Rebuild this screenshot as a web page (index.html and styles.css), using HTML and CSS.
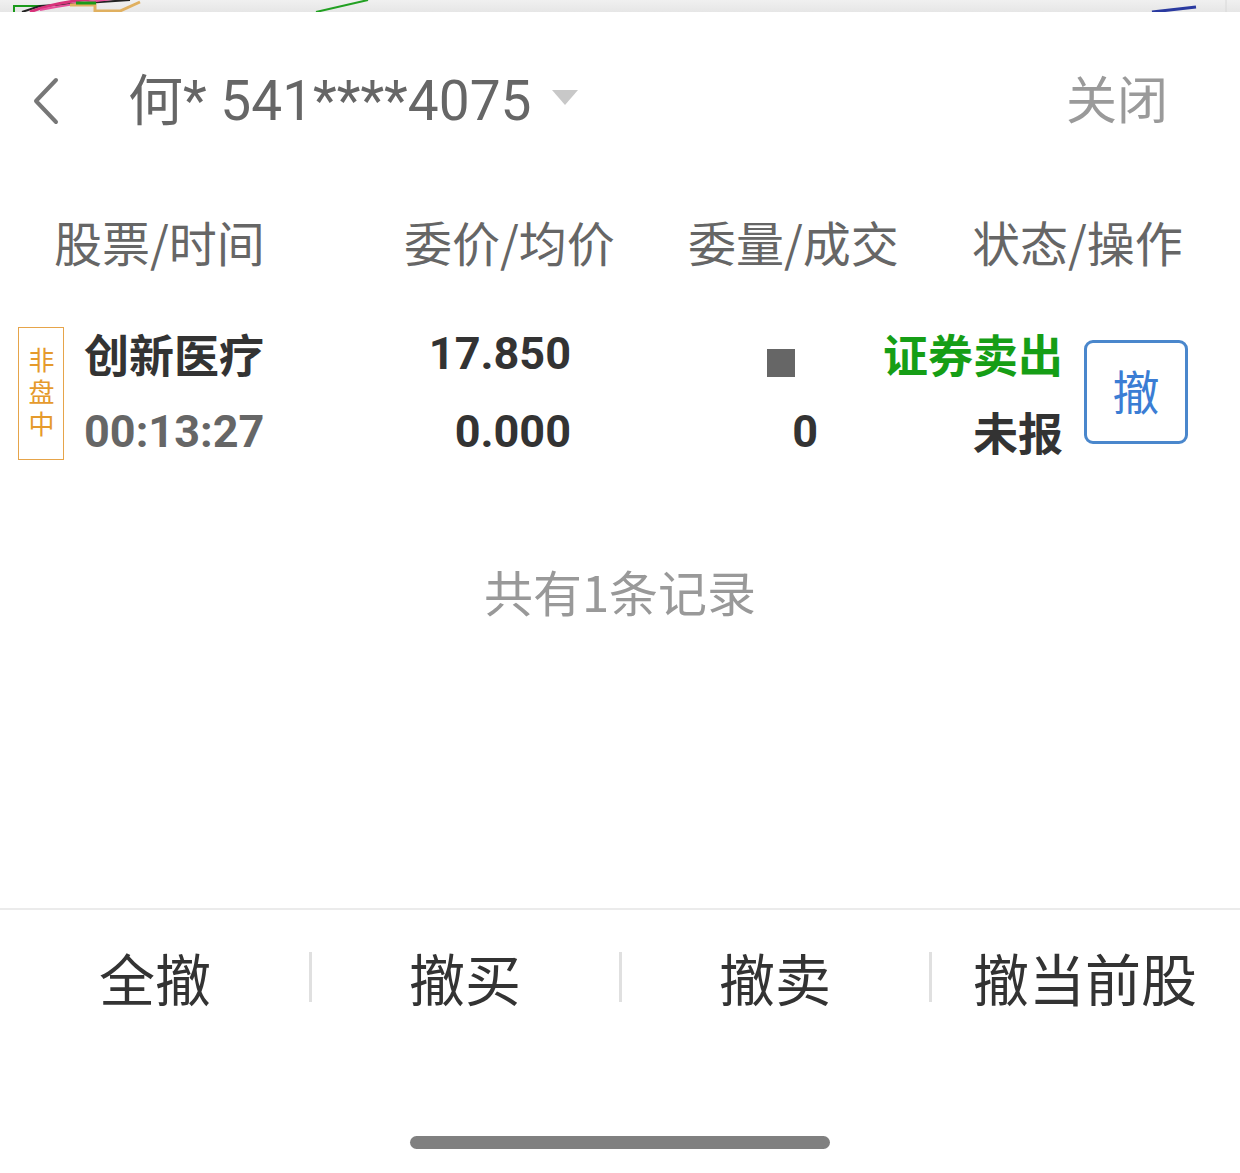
FILE: index.html
```html
<!DOCTYPE html>
<html lang="zh-CN">
<head>
<meta charset="utf-8" />
<title>撤单</title>
<link rel="stylesheet" href="styles.css">
</head>
<body>
<div class="page">
  <!-- 被弹窗盖住的行情图残边 -->
  <div class="peek">
    <svg width="1240" height="12" viewBox="0 0 1240 12">
      <polyline points="14,12 14,6 40,6" fill="none" stroke="#1a9a1a" stroke-width="2"/>
      <polyline points="22,12 40,6 70,4 100,2 130,0" fill="none" stroke="#222" stroke-width="2"/>
      <path d="M30 12 Q60 0 110 -2" fill="none" stroke="#d8327a" stroke-width="3"/>
      <path d="M40 10 Q80 2 140 -4" fill="none" stroke="#e64f9a" stroke-width="2"/>
      <polyline points="70,5 95,5 95,11 120,11 140,2" fill="none" stroke="#e0b060" stroke-width="3"/>
      <polyline points="76,3 96,3" fill="none" stroke="#1a9a1a" stroke-width="3"/>
      <line x1="316" y1="12" x2="368" y2="0" stroke="#22a022" stroke-width="2"/>
      <line x1="1152" y1="12" x2="1196" y2="7" stroke="#2a3aa0" stroke-width="3"/>
      <line x1="1226" y1="0" x2="1226" y2="12" stroke="#d8d8d8" stroke-width="1"/>
    </svg>
  </div>

  <div class="header">
    <svg class="back" width="40" height="50" viewBox="0 0 40 50">
      <polyline points="26,4 6,25 26,46" fill="none" stroke="#777" stroke-width="4" stroke-linecap="round" stroke-linejoin="round"/>
    </svg>
    <div class="account">何* 541****4075</div>
    <span class="caret"></span>
    <div class="close">关闭</div>
  </div>

  <div class="cols">
    <div>股票/时间</div>
    <div>委价/均价</div>
    <div>委量/成交</div>
    <div>状态/操作</div>
  </div>

  <div class="order">
    <div class="tag">非盘中</div>
    <div class="c1">
      <div class="line name">创新医疗</div>
      <div class="line time">00:13:27</div>
    </div>
    <div class="c2">
      <div class="line num">17.850</div>
      <div class="line num">0.000</div>
    </div>
    <div class="c3">
      <div class="line"><span class="mask"></span></div>
      <div class="line num">0</div>
    </div>
    <div class="c4">
      <div class="line sell">证券卖出</div>
      <div class="line state">未报</div>
    </div>
    <div class="cancel">撤</div>
  </div>

  <div class="empty">共有1条记录</div>

  <div class="spacer"></div>

  <div class="footer">
    <div class="btn">全撤</div>
    <div class="btn">撤买</div>
    <div class="btn">撤卖</div>
    <div class="btn">撤当前股</div>
  </div>

  <div class="home"><span></span></div>
</div>
</body>
</html>
```

FILE: styles.css
```css
*{
	margin:0;
	padding:0;
	box-sizing:border-box;
}
body{
	background:#fff;
	font-family:Roboto,"Noto Sans CJK SC",sans-serif;
	overflow:hidden;
}
.page{
	height:1173px;
	display:flex;
	flex-direction:column;
}
.peek{
	height:12px;
	background:linear-gradient(#f0f0f0,#e6e6e6);
	overflow:hidden;
}
.peek svg{display:block;}

.header{
	height:178px;
	display:flex;
	align-items:center;
	padding-left:30px;
}
.back{
	display:block;
	margin-right:58px;
}
.account{
	font-size:55px;
	color:#666;
	line-height:1;
}
.caret{
	width:0;
	height:0;
	border-left:13px solid transparent;
	border-right:13px solid transparent;
	border-top:15px solid #c8c8c8;
	margin-left:21px;
	margin-top:-8px;
}
.close{
	margin-left:auto;
	margin-right:72px;
	margin-top:-8px;
	font-family:"Noto Sans CJK SC",sans-serif;
	font-size:51px;
	color:#9a9a9a;
	line-height:1;
}

.cols{
	height:102px;
	display:grid;
	grid-template-columns:350px 284px 284px auto;
	align-items:center;
	padding-left:54px;
	font-family:"Noto Sans CJK SC",sans-serif;
	font-size:48px;
	color:#666;
}

.order{
	margin-top:23px;
	display:flex;
	align-items:center;
	padding-left:18px;
}
.tag{
	width:46px;
	height:133px;
	border:1.5px solid #e6a44a;
	color:#e59a2c;
	font-family:"Noto Sans CJK SC",sans-serif;
	font-size:26px;
	line-height:44px;
	letter-spacing:6px;
	writing-mode:vertical-rl;
	display:flex;
	align-items:center;
	justify-content:center;
	padding-top:4px;
}
.line{
	height:78px;
	line-height:78px;
	white-space:nowrap;
}
.c1{
	width:230px;
	margin-left:20px;
}
.name{
	font-family:"Noto Sans CJK SC",sans-serif;
	font-weight:700;
	font-size:45px;
	color:#333;
}
.time{
	font-weight:700;
	font-size:45px;
	color:#666;
}
.c2{width:257px;text-align:right;}
.c3{width:247px;text-align:right;}
.c4{width:245px;text-align:right;}
.num{
	font-weight:700;
	font-size:45px;
	color:#333;
}
.mask{
	display:inline-block;
	width:28px;
	height:28px;
	background:#666;
	margin-right:23px;
	vertical-align:-18px;
}
.sell{
	font-family:"Noto Sans CJK SC",sans-serif;
	font-weight:700;
	font-size:45px;
	color:#169e16;
}
.state{
	font-family:"Noto Sans CJK SC",sans-serif;
	font-weight:700;
	font-size:45px;
	color:#333;
}
.cancel{
	width:104px;
	height:104px;
	margin-left:21px;
	margin-top:-2px;
	border:3px solid #4a87cc;
	border-radius:9px;
	color:#3b7dd4;
	font-family:"Noto Sans CJK SC",sans-serif;
	font-size:47px;
	display:flex;
	align-items:center;
	justify-content:center;
	padding-bottom:6px;
}

.empty{
	margin-top:80px;
	text-align:center;
	font-family:"Noto Sans CJK SC",sans-serif;
	font-size:49px;
	color:#999;
	line-height:80px;
}
.spacer{flex:1;}

.footer{
	height:150px;
	border-top:2px solid #ebebeb;
	display:grid;
	grid-template-columns:repeat(4,1fr);
	padding-top:16px;
	align-items:start;
}
.btn{
	height:100px;
	display:flex;
	align-items:center;
	justify-content:center;
	font-family:"Noto Sans CJK SC",sans-serif;
	font-size:56px;
	color:#333;
	position:relative;
}
.btn + .btn::before{
	content:"";
	position:absolute;
	left:-1px;
	top:26px;
	width:3px;
	height:50px;
	background:#e0e0e0;
}
.home{
	height:115px;
	display:flex;
	justify-content:center;
	padding-top:78px;
}
.home span{
	width:420px;
	height:13px;
	border-radius:7px;
	background:#808080;
}
```
